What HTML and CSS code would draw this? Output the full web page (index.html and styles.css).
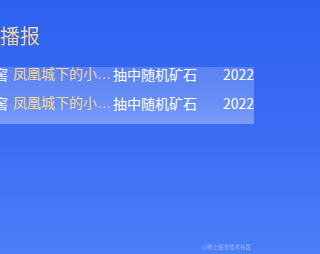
FILE: index.html
```html
<!DOCTYPE html>
<html lang="zh-CN">
<head>
<meta charset="utf-8">
<link rel="stylesheet" href="styles.css">
</head>
<body>
<div class="page">
  <h1 class="title">播报</h1>
  <div class="ticker">
    <ul class="list">
      <li class="row"><span class="pre">窖</span><span class="name">凤凰城下的小矿工</span><span class="act">抽中随机矿石</span><span class="date">2022-07-18 10:20:33</span></li>
      <li class="row"><span class="pre">窖</span><span class="name">凤凰城下的小矿工</span><span class="act">抽中随机矿石</span><span class="date">2022-07-18 10:20:33</span></li>
      <li class="row"><span class="pre">窖</span><span class="name">凤凰城下的小矿工</span><span class="act">抽中随机矿石</span><span class="date">2022-07-18 10:20:33</span></li>
    </ul>
  </div>
  <div class="mark">@稀土掘金技术社区</div>
</div>
</body>
</html>
```
FILE: styles.css
```css
html {
  background: linear-gradient(180deg, #2e61ef 0%, #3a6cf4 50%, #4b7ff8 100%);
}
html, body {
  margin: 0;
  padding: 0;
}
body {
  height: 254px;
  overflow: hidden;
  font-family: "Noto Sans CJK SC", "Noto Sans", sans-serif;
}
.page {
  position: relative;
  width: 254px;
  height: 254px;
  overflow: hidden;
  background: linear-gradient(180deg, #2e61ef 0%, #3a6cf4 50%, #4b7ff8 100%);
}
.title {
  margin: 0;
  padding: 26px 0 0 0;
  font-size: 20px;
  line-height: 20px;
  font-weight: 400;
  color: #fbe3a0;
  background: linear-gradient(180deg, #fff6d2 0%, #f6d384 100%);
  -webkit-background-clip: text;
  background-clip: text;
  -webkit-text-fill-color: transparent;
  width: max-content;
}
.ticker {
  margin-top: 21px;
  height: 57px;
  overflow: hidden;
  background: linear-gradient(180deg, rgba(255,255,255,0.19) 0%, rgba(255,255,255,0.24) 60%, rgba(255,255,255,0.33) 100%);
}
.list {
  list-style: none;
  margin: -7px 0 0 -6px;
  padding: 0;
}
.row {
  display: flex;
  align-items: center;
  height: 28.5px;
  font-size: 14px;
  line-height: 14px;
  color: #ffffff;
  white-space: nowrap;
}
.pre {
  flex: none;
  width: 14px;
  margin-right: 5px;
}
.name {
  flex: none;
  width: 99px;
  margin-right: 1px;
  overflow: hidden;
  text-overflow: ellipsis;
  color: #f6d98e;
  font-family: "Liberation Sans", "Noto Sans CJK SC", sans-serif;
}
.act {
  flex: none;
  width: 84px;
  margin-right: 26px;
}
.date {
  flex: none;
}
.mark {
  position: absolute;
  right: 3px;
  bottom: 4px;
  font-size: 5.5px;
  line-height: 6px;
  color: rgba(255,255,255,0.45);
}
```
